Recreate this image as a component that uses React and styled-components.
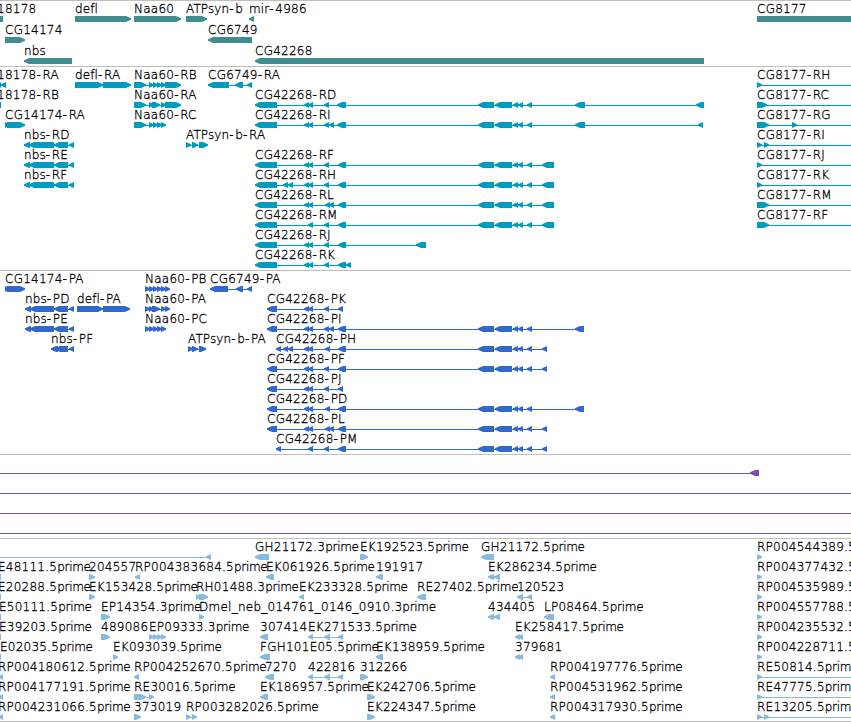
import React from 'react';
import styled, { createGlobalStyle } from 'styled-components';

const GlobalStyle = createGlobalStyle`
  body {
    margin: 0;
    background: #fff;
    overflow: hidden;
  }
`;

const Browser = styled.main`
  width: 851px;
  height: 722px;
  overflow: hidden;
  display: flex;
  flex-direction: column;
  border-bottom: 1px solid #bebebe;
  box-sizing: border-box;
  background: #fff;
`;

const TrackPanel = styled.section`
  display: flex;
  flex-direction: column;
  flex: none;
  border-top: 1px solid #bebebe;
  padding-bottom: ${props => props.$pad}px;
  color: ${props => props.$color};
`;

const Lane = styled.div`
  position: relative;
  height: ${props => props.$height}px;
`;

// features sit at their own coordinate along the sequence
const FeatureBox = styled.div`
  position: absolute;
  top: 0;
  left: ${props => props.$x}px;
`;

const Label = styled.span`
  display: block;
  box-sizing: border-box;
  height: 15px;
  padding-top: 1px;
  font-family: 'DejaVu Sans Light', 'DejaVu Sans', sans-serif;
  font-weight: 200;
  font-size: 12px;
  line-height: 15px;
  white-space: nowrap;
  color: #000;
  -webkit-text-stroke: 0.3px #000;
`;

const Run = styled.span`
  letter-spacing: ${props => props.$spacing}px;
`;

const Glyph = styled.svg`
  display: block;
  overflow: visible;
  fill: currentColor;
`;

const arrow = (s, e, dir) => {
  const tip = Math.min(5, e - s);
  if (dir === 0) return `${s},0 ${e},0 ${e},6 ${s},6`;
  return dir > 0
    ? `${s},0 ${e - tip},0 ${e},2.3 ${e},3.7 ${e - tip},6 ${s},6`
    : `${e},0 ${s + tip},0 ${s},2.3 ${s},3.7 ${s + tip},6 ${e},6`;
};

const f = (label, dir, exons, opts = {}) => ({ label, dir, exons, ...opts });

const L = -1;
const R = 1;

const genes = [
  [
    f('18178', 0, [[-3, 3]], { x: -3 }),
    f('defl', R, [[75, 131]]),
    f('Naa60', R, [[134, 181]]),
    f('ATPsyn-b', R, [[186, 207]]),
    f('mir-4986', L, [[249, 254]]),
    f('CG8177', 0, [[757, 860]]),
  ],
  [f('CG14174', R, [[5, 25]]), f('CG6749', L, [[208, 252]])],
  [f('nbs', L, [[24, 72]]), f('CG42268', L, [[255, 704]])],
];

const nbs = [[24, 30], [29, 54], [54, 68], [69, 74]];
const cluster = [[478, 494], [495, 512], [513, 518], [518, 523], [527, 532]];
const pair = [[304, 309], [308, 313]];
const rTail = [[338, 346]];
const farR = [...cluster, [542, 554]];

const transcripts = [
  [
    f('18178-RA', L, [[-4, 1], [1, 6]], { x: -3 }),
    f('defl-RA', R, [[75, 103], [103, 131]]),
    f('Naa60-RB', R, [[134, 146], [149, 154], [153, 158], [157, 162], [161, 166], [165, 181]]),
    f('CG6749-RA', L, [[208, 229], [235, 243], [247, 252]]),
    f('CG8177-RH', R, [[757, 762]], { to: 860 }),
  ],
  [
    f('18178-RB', 0, [[-3, 1]], { x: -3 }),
    f('Naa60-RA', R, [[134, 146], [149, 154], [152, 160], [161, 166], [165, 181]]),
    f('CG42268-RD', L, [[255, 277], ...pair, [324, 329], [337, 346], ...cluster, [575, 585], [696, 704]]),
    f('CG8177-RC', R, [[757, 767]], { to: 860 }),
  ],
  [
    f('CG14174-RA', R, [[5, 10], [7, 25]]),
    f('Naa60-RC', R, [[134, 146], [149, 154], [153, 158], [157, 162], [161, 166]]),
    f('CG42268-RI', L, [[255, 277], ...pair, [324, 329], [329, 334], [337, 346], ...cluster, [575, 585], [698, 703]]),
    f('CG8177-RG', R, [[757, 769], [792, 797]], { to: 860 }),
  ],
  [
    f('nbs-RD', L, nbs),
    f('ATPsyn-b-RA', R, [[186, 191], [192, 198], [199, 208]]),
    f('CG8177-RI', R, [[757, 762], [764, 769]], { to: 860 }),
  ],
  [
    f('nbs-RE', L, nbs),
    f('CG42268-RF', L, [[255, 277], ...pair, [324, 329], [338, 346], ...farR]),
    f('CG8177-RJ', R, [[757, 762]], { to: 860 }),
  ],
  [
    f('nbs-RF', L, nbs),
    f('CG42268-RH', L, [[255, 277], [283, 288], [288, 293], ...pair, [324, 329], ...rTail, ...farR]),
    f('CG8177-RK', R, [[757, 762]], { to: 860 }),
  ],
  [
    f('CG42268-RL', L, [[255, 277], ...pair, [325, 330], [329, 334], ...rTail, ...farR]),
    f('CG8177-RM', R, [[757, 769]], { to: 860 }),
  ],
  [
    f('CG42268-RM', L, [[255, 277], [308, 313], [324, 329], ...rTail, ...farR]),
    f('CG8177-RF', R, [[757, 769]], { to: 860 }),
  ],
  [f('CG42268-RJ', L, [[255, 277], ...pair, [324, 329], ...rTail, [416, 426]])],
  [f('CG42268-RK', L, [[255, 277], ...pair, [324, 329], [338, 346], [346, 351]])],
];

const nbsP = [[25, 31], [30, 54], [54, 68], [69, 74]];
const pairP = [[304, 309], [308, 313]];
const farP = [...cluster, [542, 547]];

const proteins = [
  [
    f('CG14174-PA', R, [[5, 10], [7, 25]]),
    f('Naa60-PB', R, [[145, 150], [149, 154], [153, 158], [157, 162], [161, 166], [165, 170]]),
    f('CG6749-PA', L, [[210, 228], [236, 243], [247, 252]]),
  ],
  [
    f('nbs-PD', L, nbsP),
    f('defl-PA', R, [[77, 103], [103, 130]]),
    f('Naa60-PA', R, [[145, 150], [149, 154], [152, 160], [161, 166], [165, 170]]),
    f('CG42268-PK', L, [[267, 277], ...pairP, [324, 329], [338, 343]]),
  ],
  [
    f('nbs-PE', L, nbsP),
    f('Naa60-PC', R, [[145, 150], [149, 154], [153, 158], [157, 162], [161, 166]]),
    f('CG42268-PI', L, [[267, 277], ...pairP, [324, 329], [329, 334], [338, 346], ...cluster, [575, 584]]),
  ],
  [
    f('nbs-PF', L, [[51, 58], [55, 68], [69, 74]]),
    f('ATPsyn-b-PA', R, [[188, 193], [192, 198], [199, 206]]),
    f('CG42268-PH', L, [[276, 281], [283, 288], [288, 293], ...pairP, [325, 330], [338, 346], ...farP]),
  ],
  [f('CG42268-PF', L, [[267, 277], ...pairP, [324, 329], [338, 346], ...farP])],
  [f('CG42268-PJ', L, [[267, 277], ...pairP, [324, 329], [338, 343]])],
  [f('CG42268-PD', L, [[267, 277], ...pairP, [325, 330], [338, 346], ...cluster, [575, 584]])],
  [f('CG42268-PL', L, [[267, 277], ...pairP, [325, 330], [329, 334], [338, 346], ...farP])],
  [f('CG42268-PM', L, [[276, 281], [308, 313], [324, 329], [338, 346], ...farP])],
];

const spans = [
  [f('', L, [[750, 759]], { from: -2 })],
  [f('', 0, [], { from: -2, to: 860 })],
  [f('', 0, [], { from: -2, to: 860 })],
  [f('', 0, [], { from: -2, to: 860 })],
];

const ests = [
  [
    f('', L, [[206, 211]], { from: -2 }),
    f('GH21172.3prime', L, [[255, 269]]),
    f('EK192523.5prime', R, [[360, 368]]),
    f('GH21172.5prime', L, [[481, 494]]),
    f('RP004544389.5prime', R, [[757, 762]]),
  ],
  [
    f('E48111.5prime', 0, [[-2, 1]]),
    f('204557', R, [[89, 95]]),
    f('RP004383684.5prime', L, [[135, 140]]),
    f('EK061926.5prime', L, [[266, 274]]),
    f('191917', L, [[376, 383]]),
    f('EK286234.5prime', L, [[488, 494], [494, 500]]),
    f('RP004377432.5prime', R, [[757, 762]]),
  ],
  [
    f('E20288.5prime', 0, [[-2, 1]]),
    f('EK153428.5prime', R, [[89, 95]]),
    f('RH01488.3prime', R, [[196, 201], [199, 208]]),
    f('EK233328.5prime', L, [[299, 304]]),
    f('RE27402.5prime', L, [[417, 426]]),
    f('120523', L, [[517, 523], [527, 532]]),
    f('RP004535989.5prime', R, [[757, 762]]),
  ],
  [
    f('E50111.5prime', 0, [[-1, 1]]),
    f('EP14354.3prime', R, [[101, 110]]),
    f('Dmel_neb_014761_0146_0910.3prime', R, [[199, 204]]),
    f('434405', L, [[488, 494], [494, 500]]),
    f('LP08464.5prime', L, [[544, 554]]),
    f('RP004557788.5prime', R, [[757, 762]]),
  ],
  [
    f('E39203.5prime', 0, [[-1, 1]]),
    f('489086', R, [[101, 110]]),
    f('EP09333.3prime', R, [[149, 154], [153, 158], [157, 162], [161, 166]]),
    f('307414', L, [[260, 268]]),
    f('EK271533.5prime', L, [[308, 313], [324, 330], [338, 343]]),
    f('EK258417.5prime', L, [[515, 520], [518, 523]]),
    f('RP004235532.5prime', R, [[757, 762]]),
  ],
  [
    f('E02035.5prime', 0, [[0, 1]]),
    f('EK093039.5prime', R, [[113, 118]]),
    f('FGH101E05.5prime', L, [[260, 270]]),
    f('EK138959.5prime', L, [[376, 383]]),
    f('379681', L, [[515, 520], [518, 523]]),
    f('RP004228711.5prime', R, [[757, 762]]),
  ],
  [
    f('RP004180612.5prime', L, [[-2, 3]]),
    f('RP004252670.5prime', L, [[134, 139]]),
    f('7270', L, [[265, 274]]),
    f('422816', L, [[308, 313], [324, 330], [338, 343]]),
    f('312266', R, [[360, 368]]),
    f('RP004197776.5prime', L, [[550, 555]]),
    f('RE50814.5prime', R, [[757, 762]], { to: 860 }),
  ],
  [
    f('RP004177191.5prime', L, [[-2, 3]]),
    f('RE30016.5prime', R, [[134, 146], [149, 154]]),
    f('EK186957.5prime', L, [[260, 268]]),
    f('EK242706.5prime', R, [[367, 375]]),
    f('RP004531962.5prime', L, [[550, 555]]),
    f('RE47775.5prime', R, [[757, 762]], { to: 860 }),
  ],
  [
    f('RP004231066.5prime', L, [[-2, 3]]),
    f('373019', R, [[134, 141]]),
    f('RP003282026.5prime', R, [[186, 191], [192, 197]]),
    f('EK224347.5prime', R, [[367, 375]]),
    f('RP004317930.5prime', L, [[550, 555]]),
    f('RE13205.5prime', R, [[757, 762], [764, 769]], { to: 860 }),
  ],
];

const tracks = [
  { id: 'genes', color: '#408c91', lane: 21, pad: 2, lanes: genes },
  { id: 'transcripts', color: '#009cbf', lane: 20, pad: 3, lanes: transcripts },
  { id: 'proteins', color: '#3069cb', lane: 20, pad: 3, lanes: proteins },
  { id: 'spans', color: '#7354a8', lane: 20, pad: 3, lanes: spans },
  { id: 'ests', color: '#87bbdd', lane: 20, pad: 2, lanes: ests },
];

// digits run wide, the read suffix runs tight
const spacingOf = run => {
  if (run === '-') return 1.7;
  if (run === 'prime') return -0.3;
  return /\d/.test(run) ? 0.25 : 0.1;
};

const Feature = ({ label, dir, exons, x, from, to }) => {
  const start = from ?? exons[0][0];
  const end = to ?? exons[exons.length - 1][1];
  const left = x ?? start;
  return (
    <FeatureBox $x={left}>
      <Label>
        {label.split(/(-|prime)/).filter(Boolean).map((run, i) => (
          <Run key={i} $spacing={spacingOf(run)}>{run}</Run>
        ))}
      </Label>
      <Glyph width={Math.max(1, end - left)} height="6">
        <rect x={start - left} y="3" width={end - start} height="1" shapeRendering="crispEdges" />
        {exons.map(([s, e], i) => (
          <polygon key={i} points={arrow(s - left, e - left, dir)} />
        ))}
      </Glyph>
    </FeatureBox>
  );
};

const App = () => (
  <>
    <GlobalStyle />
    <Browser>
      {tracks.map(track => (
        <TrackPanel key={track.id} $color={track.color} $pad={track.pad}>
          {track.lanes.map((lane, i) => (
            <Lane key={i} $height={track.lane}>
              {lane.map((feature, j) => (
                <Feature key={j} {...feature} />
              ))}
            </Lane>
          ))}
        </TrackPanel>
      ))}
    </Browser>
  </>
);

export default App;
